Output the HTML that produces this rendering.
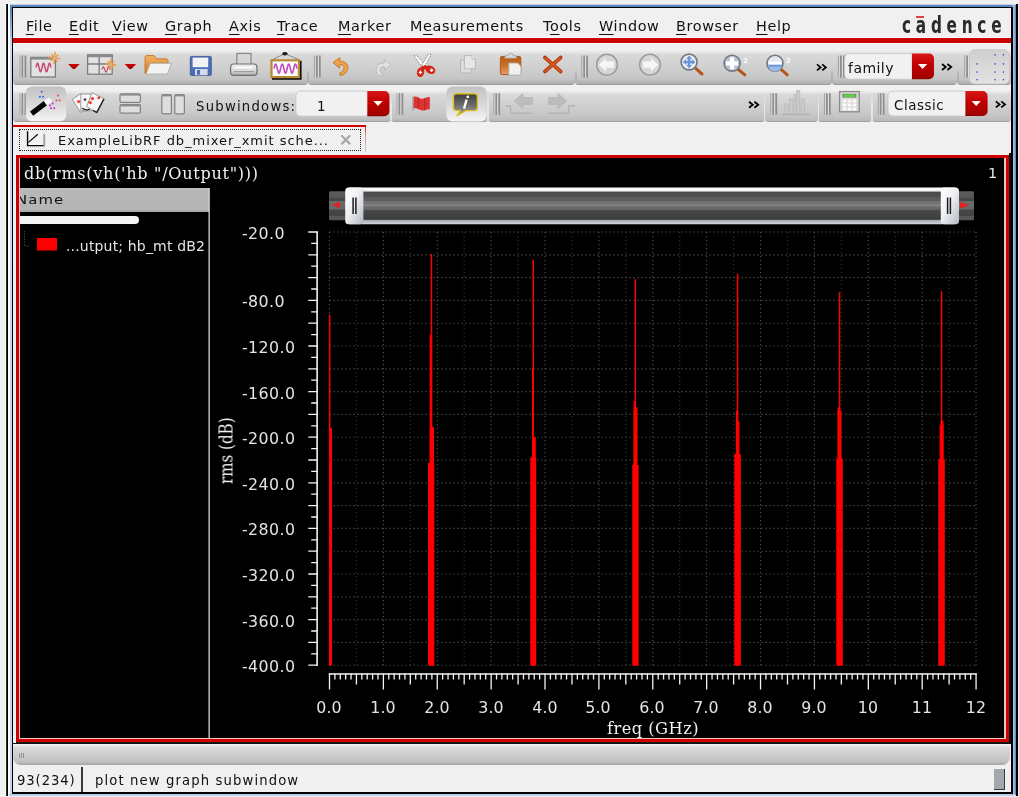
<!DOCTYPE html><html><head><meta charset="utf-8"><title>Cadence waveform viewer</title><style>
html,body{margin:0;padding:0;}
body{width:1019px;height:797px;overflow:hidden;background:#f0f0f0;position:relative;font-family:"DejaVu Sans","Liberation Sans",sans-serif;color:#000;}
.a{position:absolute;}
.t{position:absolute;white-space:pre;line-height:1;will-change:transform;}
.menu{font-size:14.4px;top:18.8px;letter-spacing:0.62px;color:#111;}
.menu u{text-decoration:underline;text-underline-offset:2.5px;text-decoration-thickness:1.2px;}
.tb{position:absolute;background:linear-gradient(#f0f0f0 0%,#f0f0f0 10%,#e6e6e6 16%,#d9d9d9 22%,#d1d1d1 50%,#c9c9c9 75%,#c3c3c3 86%,#bbbbbb 89%,#b3b3b3 96%,#9c9c9c 97.8%,#9c9c9c 100%);border-radius:0 0 3.4px 3.4px;}
.tb2{position:absolute;background:linear-gradient(#f1f1f1 0%,#f1f1f1 14%,#e6e6e6 20%,#d9d9d9 26%,#d1d1d1 50%,#c9c9c9 75%,#c1c1c1 90%,#b8b8b8 96%,#a2a2a2 97.6%,#a2a2a2 100%);border-radius:0 0 3.4px 3.4px;}
.ui{font-size:13px;letter-spacing:0.96px;color:#111;}
.pl{font-size:14px;color:#e4e4e4;}
</style></head><body>
<div class="a" style="left:5px;top:3px;width:5px;height:793px;background:#fafafa"></div>
<div class="a" style="left:6px;top:4px;width:2px;height:792px;background:linear-gradient(90deg,#555 0,#000 50%,#000 100%)"></div>
<div class="a" style="left:10px;top:5px;width:2px;height:790px;background:linear-gradient(#5786bf 0,#5786bf 6px,#c9d9f2 40px,#c3d3f0 100%)"></div>
<div class="a" style="left:10px;top:4px;width:1007px;height:1px;background:#c5cfe3"></div>
<div class="a" style="left:10px;top:5px;width:1007px;height:2px;background:#5786bf"></div>
<div class="a" style="left:1012px;top:5px;width:4px;height:790px;background:linear-gradient(90deg,#86a8d8 0,#a9c2e6 45%,#4f80bb 100%)"></div>
<div class="a" style="left:1016px;top:4px;width:2px;height:792px;background:#000"></div>
<div class="a" style="left:9px;top:794px;width:1006px;height:2px;background:#bccdee"></div>
<div class="a" style="left:12px;top:7px;width:1001px;height:787px;box-sizing:border-box;border:1px solid #000;border-right-width:2px;border-bottom-width:2px;"></div>
<div class="t menu" style="left:26.4px"><u>F</u>ile</div>
<div class="t menu" style="left:68.6px"><u>E</u>dit</div>
<div class="t menu" style="left:112px"><u>V</u>iew</div>
<div class="t menu" style="left:165.2px"><u>G</u>raph</div>
<div class="t menu" style="left:229.4px"><u>A</u>xis</div>
<div class="t menu" style="left:276.8px"><u>T</u>race</div>
<div class="t menu" style="left:338px"><u>M</u>arker</div>
<div class="t menu" style="left:409.6px">M<u>e</u>asurements</div>
<div class="t menu" style="left:542.8px">T<u>o</u>ols</div>
<div class="t menu" style="left:599px"><u>W</u>indow</div>
<div class="t menu" style="left:675.6px"><u>B</u>rowser</div>
<div class="t menu" style="left:755.6px"><u>H</u>elp</div>
<div class="t" style="left:901.6px;top:14.4px;font-family:'DejaVu Sans Condensed','DejaVu Sans',sans-serif;font-weight:bold;font-size:17px;letter-spacing:4.75px;color:#2a2a2a;transform-origin:0 0;transform:scaleY(1.36)">cadence</div>
<div class="a" style="left:916px;top:15.8px;width:7.6px;height:2px;background:#e04040"></div>
<div class="a" style="left:13px;top:38px;width:998px;height:5px;background:#cc0000"></div>
<div class="a" style="left:13px;top:37px;width:998px;height:1px;background:#f6fbfb"></div>
<div class="a" style="left:13px;top:43px;width:998px;height:1px;background:#f6f6f6"></div>
<div class="tb" style="left:13px;top:46px;width:295px;height:38.5px"></div>
<div class="tb" style="left:308px;top:46px;width:267.4px;height:38.5px"></div>
<div class="tb" style="left:575.4px;top:46px;width:256.6px;height:38.5px"></div>
<div class="tb" style="left:832px;top:46px;width:125.39999999999998px;height:38.5px"></div>
<div class="tb" style="left:957.4px;top:46px;width:53.60000000000002px;height:38.5px"></div>
<div class="a" style="left:307.1px;top:70.5px;width:2.2px;height:12px;background:linear-gradient(rgba(184,184,184,0.3),#b2b2b2 30%)"></div>
<div class="a" style="left:574.5px;top:70.5px;width:2.2px;height:12px;background:linear-gradient(rgba(184,184,184,0.3),#b2b2b2 30%)"></div>
<div class="a" style="left:831.1px;top:70.5px;width:2.2px;height:12px;background:linear-gradient(rgba(184,184,184,0.3),#b2b2b2 30%)"></div>
<div class="a" style="left:956.5px;top:70.5px;width:2.2px;height:12px;background:linear-gradient(rgba(184,184,184,0.3),#b2b2b2 30%)"></div>
<div class="tb2" style="left:13px;top:85px;width:378.2px;height:37.400000000000006px"></div>
<div class="tb2" style="left:391.2px;top:85px;width:97.0px;height:37.400000000000006px"></div>
<div class="tb2" style="left:488.2px;top:85px;width:276.40000000000003px;height:37.400000000000006px"></div>
<div class="tb2" style="left:764.6px;top:85px;width:53.799999999999955px;height:37.400000000000006px"></div>
<div class="tb2" style="left:818.4px;top:85px;width:53.80000000000007px;height:37.400000000000006px"></div>
<div class="tb2" style="left:872.2px;top:85px;width:138.79999999999995px;height:37.400000000000006px"></div>
<div class="a" style="left:390.3px;top:94px;width:1.8px;height:26px;background:linear-gradient(rgba(236,236,236,0),rgba(236,236,236,0.85) 45%,rgba(232,232,232,0.9))"></div>
<div class="a" style="left:487.3px;top:94px;width:1.8px;height:26px;background:linear-gradient(rgba(236,236,236,0),rgba(236,236,236,0.85) 45%,rgba(232,232,232,0.9))"></div>
<div class="a" style="left:763.7px;top:94px;width:1.8px;height:26px;background:linear-gradient(rgba(236,236,236,0),rgba(236,236,236,0.85) 45%,rgba(232,232,232,0.9))"></div>
<div class="a" style="left:817.5px;top:94px;width:1.8px;height:26px;background:linear-gradient(rgba(236,236,236,0),rgba(236,236,236,0.85) 45%,rgba(232,232,232,0.9))"></div>
<div class="a" style="left:871.3000000000001px;top:94px;width:1.8px;height:26px;background:linear-gradient(rgba(236,236,236,0),rgba(236,236,236,0.85) 45%,rgba(232,232,232,0.9))"></div>
<svg class="a" style="left:0;top:0" width="1019" height="797" viewBox="0 0 1019 797">
<defs>
<linearGradient id="ra" x1="0" y1="0" x2="0" y2="1"><stop offset="0" stop-color="#d40000"/><stop offset="1" stop-color="#9c0000"/></linearGradient>
<linearGradient id="rb" x1="0" y1="0" x2="0" y2="1"><stop offset="0" stop-color="#d81818"/><stop offset="0.45" stop-color="#c00000"/><stop offset="1" stop-color="#a00000"/></linearGradient>
<linearGradient id="pr" x1="0" y1="0" x2="0" y2="1"><stop offset="0" stop-color="#c2c2c2"/><stop offset="0.5" stop-color="#d8d8d8"/><stop offset="1" stop-color="#f4f4f4"/></linearGradient>
<linearGradient id="bub" x1="0" y1="0" x2="0" y2="1"><stop offset="0" stop-color="#3c3c3c"/><stop offset="0.5" stop-color="#6a6a6a"/><stop offset="1" stop-color="#a0a0a0"/></linearGradient>
<linearGradient id="fold" x1="0" y1="0" x2="0" y2="1"><stop offset="0" stop-color="#f2b264"/><stop offset="1" stop-color="#d87820"/></linearGradient>
<linearGradient id="clip" x1="0" y1="0" x2="0" y2="1"><stop offset="0" stop-color="#b85a10"/><stop offset="0.6" stop-color="#d07830"/><stop offset="1" stop-color="#e8a070"/></linearGradient>
<linearGradient id="prn" x1="0" y1="0" x2="0" y2="1"><stop offset="0" stop-color="#f0f0f0"/><stop offset="0.55" stop-color="#dcdcdc"/><stop offset="1" stop-color="#a8a8a8"/></linearGradient>
<linearGradient id="gb" x1="0" y1="0" x2="0" y2="1"><stop offset="0" stop-color="#cfcfcf"/><stop offset="1" stop-color="#e2e2e2"/></linearGradient>
</defs>
<rect x="19.5" y="55.5" width="1.2" height="22.099999999999994" fill="#a6a6a6"/><rect x="20.7" y="55.5" width="0.9" height="22.099999999999994" fill="#d8d8d8"/><rect x="21.6" y="55.5" width="1.9" height="22.099999999999994" fill="#8e8e8e"/><rect x="23.5" y="55.5" width="1.0" height="22.099999999999994" fill="#e6e6e6"/><rect x="24.5" y="55.5" width="1.8" height="22.099999999999994" fill="#8e8e8e"/>
<rect x="313.9" y="55.5" width="1.2" height="22.099999999999994" fill="#a6a6a6"/><rect x="315.1" y="55.5" width="0.9" height="22.099999999999994" fill="#d8d8d8"/><rect x="316.0" y="55.5" width="1.9" height="22.099999999999994" fill="#8e8e8e"/><rect x="317.9" y="55.5" width="1.0" height="22.099999999999994" fill="#e6e6e6"/><rect x="318.9" y="55.5" width="1.8" height="22.099999999999994" fill="#8e8e8e"/>
<rect x="581.2" y="55.5" width="1.2" height="22.099999999999994" fill="#a6a6a6"/><rect x="582.4" y="55.5" width="0.9" height="22.099999999999994" fill="#d8d8d8"/><rect x="583.3" y="55.5" width="1.9" height="22.099999999999994" fill="#8e8e8e"/><rect x="585.2" y="55.5" width="1.0" height="22.099999999999994" fill="#e6e6e6"/><rect x="586.2" y="55.5" width="1.8" height="22.099999999999994" fill="#8e8e8e"/>
<rect x="837.9" y="55.5" width="1.2" height="22.099999999999994" fill="#a6a6a6"/><rect x="839.1" y="55.5" width="0.9" height="22.099999999999994" fill="#d8d8d8"/><rect x="840.0" y="55.5" width="1.9" height="22.099999999999994" fill="#8e8e8e"/><rect x="841.9" y="55.5" width="1.0" height="22.099999999999994" fill="#e6e6e6"/><rect x="842.9" y="55.5" width="1.8" height="22.099999999999994" fill="#8e8e8e"/>
<rect x="964.1" y="55.5" width="1.2" height="22.099999999999994" fill="#a6a6a6"/><rect x="965.3" y="55.5" width="0.9" height="22.099999999999994" fill="#d8d8d8"/><rect x="966.2" y="55.5" width="1.9" height="22.099999999999994" fill="#8e8e8e"/><rect x="968.1" y="55.5" width="1.0" height="22.099999999999994" fill="#e6e6e6"/><rect x="969.1" y="55.5" width="1.8" height="22.099999999999994" fill="#8e8e8e"/>
<rect x="30.8" y="57.4" width="24.6" height="19.6" fill="#e2e2e2" stroke="#7c7c7c" stroke-width="1.3"/>
<rect x="30.8" y="57.4" width="24.6" height="2.2" fill="#8a8a8a"/>
<path d="M36.0 67.5 L36.4 65.9 L36.8 64.5 L37.1 63.5 L37.5 63.2 L37.9 63.5 L38.2 64.5 L38.6 65.9 L39.0 67.5 L39.4 69.1 L39.8 70.5 L40.1 71.5 L40.5 71.8 L40.9 71.5 L41.2 70.5 L41.6 69.1 L42.0 67.5 L42.4 65.9 L42.8 64.5 L43.1 63.5 L43.5 63.2 L43.9 63.5 L44.2 64.5 L44.6 65.9 L45.0 67.5 L45.4 69.1 L45.8 70.5 L46.1 71.5 L46.5 71.8 L46.9 71.5 L47.2 70.5 L47.6 69.1 L48.0 67.5 L48.4 65.9 L48.8 64.5 L49.1 63.5 L49.5 63.2 L49.9 63.5 L50.2 64.5 L50.6 65.9 L51.0 67.5" fill="none" stroke="#c84878" stroke-width="1.5" stroke-linejoin="round"/>
<path d="M48.2 57.4 L60.8 58.6 M51.3 54.1 L57.7 61.9 M55.1 51.7 L53.9 64.3 M58.4 54.8 L50.6 61.2 " stroke="#f0983a" stroke-width="1.4" fill="none"/><circle cx="54.5" cy="58" r="1.3" fill="#c8c0b8"/>
<path d="M68.2 63.9 H79.7 L74.9 69.1 H72.9 Z" fill="url(#ra)"/>
<rect x="87.6" y="54.8" width="24.6" height="19.4" fill="#e2e2e2" stroke="#7c7c7c" stroke-width="1.3"/>
<rect x="87.6" y="54.8" width="24.6" height="2.4" fill="#8a8a8a"/>
<path d="M99.2 57 V74 M88 64 H112" stroke="#7c7c7c" stroke-width="1.3"/>
<path d="M102.0 69.5 L102.2 68.9 L102.4 68.3 L102.6 67.8 L102.8 67.4 L103.0 67.1 L103.2 66.9 L103.4 66.9 L103.6 67.0 L103.8 67.3 L104.0 67.7 L104.2 68.1 L104.4 68.7 L104.6 69.3 L104.8 69.9 L105.0 70.5 L105.2 71.0 L105.4 71.5 L105.6 71.8 L105.8 72.0 L106.0 72.1 L106.2 72.0 L106.4 71.8 L106.6 71.5 L106.8 71.0 L107.0 70.5 L107.2 69.9 L107.4 69.3 L107.6 68.7 L107.8 68.1 L108.0 67.7 L108.2 67.3 L108.4 67.0 L108.6 66.9 L108.8 66.9 L109.0 67.1 L109.2 67.4 L109.4 67.8 L109.6 68.3 L109.8 68.9 L110.0 69.5" fill="none" stroke="#c84878" stroke-width="1.2" stroke-linejoin="round"/>
<path d="M104.9 63.8 L116.1 65.0 M107.7 60.9 L113.3 67.9 M111.1 58.8 L109.9 70.0 M114.0 61.6 L107.0 67.2 " stroke="#f0983a" stroke-width="1.4" fill="none"/><circle cx="110.5" cy="64.4" r="1.3" fill="#c8c0b8"/>
<path d="M124.7 63.9 H136.2 L131.4 69.1 H129.4 Z" fill="url(#ra)"/>
<path d="M145 73.5 V57.5 q0 -2 2 -2 h6 q1.5 0 2.5 2 l1 1.3 h9.5 q2 0 2 2 v2.5 h-17.5 l-4.3 10.2 Z" fill="url(#fold)" stroke="#c07020" stroke-width="0.8"/>
<path d="M150.2 63.3 H171.4 L167.4 74 H146 Z" fill="#f2f2f2" stroke="#a8a8a8" stroke-width="0.8"/>
<rect x="190.3" y="56.4" width="21" height="19" rx="1.2" fill="#4c6eb4" stroke="#3c5898" stroke-width="0.9"/>
<rect x="192.6" y="57.6" width="15.6" height="9.6" fill="#f2f2f4"/>
<rect x="195" y="69" width="12.6" height="6.2" fill="#d4dae8"/>
<rect x="197" y="70" width="3" height="4.6" fill="#4c6eb4"/>
<rect x="236.8" y="53.4" width="14.2" height="11.6" fill="#d6d6d6" stroke="#808080" stroke-width="1.1"/>
<rect x="230.6" y="64" width="26.4" height="11.4" rx="3.2" fill="url(#prn)" stroke="#6e6e6e" stroke-width="1.2"/>
<path d="M235 67.6 H252.6" stroke="#fff" stroke-width="1.6"/><path d="M234 71.6 H254" stroke="#9a9a9a" stroke-width="1"/>
<path d="M271.5 60 L284.9 53.6 L299.5 60" fill="none" stroke="#8a8a8a" stroke-width="1"/>
<ellipse cx="284.9" cy="53.8" rx="2.8" ry="1.8" fill="#1a1a1a"/>
<rect x="272" y="60.8" width="29.6" height="19" fill="#111"/>
<rect x="270.4" y="59.2" width="29.6" height="19" fill="#b88a32"/>
<rect x="272.6" y="61.4" width="25.2" height="14.6" fill="#fbfbfb"/>
<path d="M274.0 68.6 L274.6 66.2 L275.1 64.5 L275.7 64.0 L276.3 64.9 L276.9 66.8 L277.4 69.3 L278.0 71.6 L278.6 73.0 L279.2 73.1 L279.8 71.9 L280.3 69.7 L280.9 67.2 L281.5 65.1 L282.1 64.1 L282.6 64.4 L283.2 65.9 L283.8 68.2 L284.4 70.7 L284.9 72.5 L285.5 73.2 L286.1 72.5 L286.6 70.7 L287.2 68.2 L287.8 65.9 L288.4 64.4 L288.9 64.1 L289.5 65.1 L290.1 67.2 L290.7 69.7 L291.2 71.9 L291.8 73.1 L292.4 73.0 L293.0 71.6 L293.6 69.3 L294.1 66.8 L294.7 64.9 L295.3 64.0 L295.9 64.5 L296.4 66.2 L297.0 68.6" fill="none" stroke="#c050c0" stroke-width="1.6" stroke-linejoin="round"/>
<path d="M333 62.5 L340 57.5 L339.6 61 C346 61 348.8 65 347.6 69.5 C346.8 72.8 344 75 340.4 75.6 L339.6 73.2 C342.6 72 344 70.2 344 67.6 C344 65.4 342.6 64.6 339.2 64.8 L339.4 68 Z" fill="#eea24e" stroke="#c6781e" stroke-width="1" stroke-linejoin="round"/>
<path d="M391 64.5 L384 59.5 L384.4 63 C378 63 375.2 67 376.4 71.5 C377.2 74.8 380 76 382.6 76.2 L383 74.2 C381 73.4 380 72.2 380 69.8 C380 67.4 381.4 66.6 384.8 66.8 L384.6 70 Z" fill="#e2e2e2" stroke="#b6b6b6" stroke-width="0.9" stroke-linejoin="round"/>
<path d="M414 55.8 L416.4 55 L425.6 65.6 L422.4 67.8 Z" fill="#f8f8f8" stroke="#7c7c7c" stroke-width="0.9" stroke-dasharray="1.2 0.8"/>
<path d="M431 54.6 L428.6 54 L421.2 65.6 L424.6 67.6 Z" fill="#f8f8f8" stroke="#7c7c7c" stroke-width="0.9" stroke-dasharray="1.2 0.8"/>
<path d="M422.6 65.4 L425.4 67.6 L423.6 71 L420 69 Z" fill="#d02412"/>
<path d="M424.6 65 L422.4 67.6 L428 71 L429.6 67.4 Z" fill="#d02412"/>
<ellipse cx="420.6" cy="72.2" rx="3.7" ry="4.9" fill="#d42614" transform="rotate(14 420.6 72.2)"/>
<ellipse cx="430.4" cy="69.8" rx="5.2" ry="4" fill="#d42614" transform="rotate(28 430.4 69.8)"/>
<path d="M420.4 70.6 v3.6 M418.6 72.4 h3.6" stroke="#fbeaea" stroke-width="1.3"/><path d="M431.6 68.6 v3.4 M429.9 70.3 h3.4" stroke="#fbeaea" stroke-width="1.5"/>
<path d="M460.6 59.8 H471.2 V73 H460.6 Z" fill="#dedede" stroke="#b4b4b4" stroke-width="0.9"/>
<path d="M464.4 55.6 H472 L475.4 59 V68.8 H464.4 Z" fill="#e6e6e6" stroke="#b4b4b4" stroke-width="0.9"/>
<path d="M472 55.6 V59 H475.4" fill="#f6f6f6" stroke="#b4b4b4" stroke-width="0.8"/>
<rect x="500.4" y="56.4" width="20.4" height="18.2" rx="1.6" fill="url(#clip)" stroke="#a85010" stroke-width="0.9"/>
<path d="M504.6 58.2 q0 -3 3 -3 h0.8 q0 -2 2.2 -2 q2.2 0 2.2 2 h0.8 q3 0 3 3 Z" fill="#d8d8d8" stroke="#9c9c9c" stroke-width="0.8"/>
<path d="M508.8 63 H517.6 L521 66.4 V75.2 H508.8 Z" fill="#f0f0f0" stroke="#a4a4a4" stroke-width="0.8"/>
<path d="M545 57.6 L560.6 71.4 M560.6 57.6 L545 71.4" stroke="#a83810" stroke-width="3.8" stroke-linecap="round"/><path d="M545.4 58 L560.2 71 M560.2 58 L545.4 71" stroke="#d8581c" stroke-width="2.1" stroke-linecap="round"/>
<circle cx="607" cy="64.7" r="10.4" fill="#d6d6d6" stroke="#9c9c9c" stroke-width="1.5"/>
<path d="M599 64.7 L606 58 V61.6 H614 V67.8 H606 V71.4 Z" fill="#f6f6f6"/>
<circle cx="650" cy="64.7" r="10.4" fill="#d6d6d6" stroke="#9c9c9c" stroke-width="1.5"/>
<path d="M658 64.7 L651 58 V61.6 H643 V67.8 H651 V71.4 Z" fill="#f6f6f6"/>
<path d="M694.8 67.7 L702 74" stroke="#b4561a" stroke-width="3" stroke-linecap="round"/><circle cx="689.1" cy="62" r="7.9" fill="#f2f5f9" stroke="#737a84" stroke-width="1.8"/><circle cx="689.1" cy="62" r="6.5" fill="#eef2f8"/><path d="M689.1 55.6 l3 3.4 h-1.7 v1.7 h1.7 v-1.7 l3.4 3 l-3.4 3 v-1.7 h-1.7 v1.7 h1.7 l-3 3.4 l-3 -3.4 h1.7 v-1.7 h-1.7 v1.7 l-3.4 -3 l3.4 -3 v1.7 h1.7 v-1.7 h-1.7 Z" fill="#6b96d8"/>
<path d="M737.8 69.0 L744.8 74.8" stroke="#b4561a" stroke-width="3" stroke-linecap="round"/><circle cx="732.1" cy="63.3" r="7.9" fill="#f2f5f9" stroke="#737a84" stroke-width="1.8"/><circle cx="732.1" cy="63.3" r="7.0" fill="#b4c0d2"/><path d="M726.1 63.3 H738.1 M732.1 57.3 V69.3" stroke="#ffffff" stroke-width="4.2"/>
<path d="M780.7 69.0 L787.2 74.8" stroke="#b4561a" stroke-width="3" stroke-linecap="round"/><circle cx="775" cy="63.3" r="7.9" fill="#f2f5f9" stroke="#737a84" stroke-width="1.8"/><circle cx="775" cy="63.3" r="7.0" fill="#e4e9f0"/><path d="M768.1 64.5 A6.9 6.9 0 0 0 781.9 64.5 Z" fill="#9dbbe8"/><path d="M768.5 65.7 H781.5" stroke="#6b96d8" stroke-width="2"/><path d="M768.6 63.099999999999994 H781.4" stroke="#ffffff" stroke-width="2.6"/>
<text x="743.2" y="62.6" font-family="DejaVu Sans, Liberation Sans, sans-serif" font-size="6.6" font-weight="bold" fill="#fbfbfb">2</text>
<text x="786" y="62.6" font-family="DejaVu Sans, Liberation Sans, sans-serif" font-size="6.6" font-weight="bold" fill="#fbfbfb">2</text>
<path d="M817.0 64.4 L820.6 67.4 L817.0 70.4" fill="none" stroke="#000" stroke-width="1.8"/><path d="M822.2 64.4 L825.8 67.4 L822.2 70.4" fill="none" stroke="#000" stroke-width="1.8"/>
<path d="M942.0 64.0 L945.8 67.0 L942.0 70.0" fill="none" stroke="#000" stroke-width="1.8"/><path d="M947.4 64.0 L951.2 67.0 L947.4 70.0" fill="none" stroke="#000" stroke-width="1.8"/>
<path d="M849.5 53.6 H912 V79.2 H849.5 a5 5 0 0 1 -5 -5 V58.6 a5 5 0 0 1 5 -5 Z" fill="#f1f1f1" stroke="#c4c4c4" stroke-width="0.8"/><path d="M912 53.6 H929 a5 5 0 0 1 5 5 V74.2 a5 5 0 0 1 -5 5 H912 Z" fill="url(#rb)"/><path d="M912 78.2 H930" stroke="#7a0000" stroke-width="1" opacity="0.6"/><path d="M918.0 64.1 H927.2 L922.6 69.1 Z" fill="#fff"/>
<rect x="969.4" y="49.6" width="40" height="34.4" rx="5.5" fill="url(#gb)" stroke="#c6c6c6" stroke-width="0.8"/>
<rect x="994.4" y="54.199999999999996" width="1.3" height="1.3" fill="#3038c8"/><rect x="1002.8" y="54.199999999999996" width="1.3" height="1.3" fill="#3038c8"/><rect x="976.4" y="63.199999999999996" width="1.3" height="1.3" fill="#3038c8"/><rect x="994.4" y="63.199999999999996" width="1.3" height="1.3" fill="#3038c8"/><rect x="1002.8" y="63.199999999999996" width="1.3" height="1.3" fill="#3038c8"/><rect x="976.4" y="71.4" width="1.3" height="1.3" fill="#3038c8"/><rect x="994.4" y="71.4" width="1.3" height="1.3" fill="#3038c8"/><rect x="1002.8" y="71.4" width="1.3" height="1.3" fill="#3038c8"/><rect x="976.4" y="79.0" width="1.3" height="1.3" fill="#3038c8"/><rect x="994.4" y="79.0" width="1.3" height="1.3" fill="#3038c8"/><rect x="1002.8" y="79.0" width="1.3" height="1.3" fill="#3038c8"/>
<rect x="19.5" y="93.2" width="1.2" height="21.599999999999994" fill="#a6a6a6"/><rect x="20.7" y="93.2" width="0.9" height="21.599999999999994" fill="#d8d8d8"/><rect x="21.6" y="93.2" width="1.9" height="21.599999999999994" fill="#8e8e8e"/><rect x="23.5" y="93.2" width="1.0" height="21.599999999999994" fill="#e6e6e6"/><rect x="24.5" y="93.2" width="1.8" height="21.599999999999994" fill="#8e8e8e"/>
<rect x="396.5" y="93.2" width="1.2" height="21.599999999999994" fill="#a6a6a6"/><rect x="397.7" y="93.2" width="0.9" height="21.599999999999994" fill="#d8d8d8"/><rect x="398.6" y="93.2" width="1.9" height="21.599999999999994" fill="#8e8e8e"/><rect x="400.5" y="93.2" width="1.0" height="21.599999999999994" fill="#e6e6e6"/><rect x="401.5" y="93.2" width="1.8" height="21.599999999999994" fill="#8e8e8e"/>
<rect x="493.3" y="93.2" width="1.2" height="21.599999999999994" fill="#a6a6a6"/><rect x="494.5" y="93.2" width="0.9" height="21.599999999999994" fill="#d8d8d8"/><rect x="495.4" y="93.2" width="1.9" height="21.599999999999994" fill="#8e8e8e"/><rect x="497.3" y="93.2" width="1.0" height="21.599999999999994" fill="#e6e6e6"/><rect x="498.3" y="93.2" width="1.8" height="21.599999999999994" fill="#8e8e8e"/>
<rect x="770.3" y="93.2" width="1.2" height="21.599999999999994" fill="#a6a6a6"/><rect x="771.5" y="93.2" width="0.9" height="21.599999999999994" fill="#d8d8d8"/><rect x="772.4" y="93.2" width="1.9" height="21.599999999999994" fill="#8e8e8e"/><rect x="774.3" y="93.2" width="1.0" height="21.599999999999994" fill="#e6e6e6"/><rect x="775.3" y="93.2" width="1.8" height="21.599999999999994" fill="#8e8e8e"/>
<rect x="823.9" y="93.2" width="1.2" height="21.599999999999994" fill="#a6a6a6"/><rect x="825.1" y="93.2" width="0.9" height="21.599999999999994" fill="#d8d8d8"/><rect x="826.0" y="93.2" width="1.9" height="21.599999999999994" fill="#8e8e8e"/><rect x="827.9" y="93.2" width="1.0" height="21.599999999999994" fill="#e6e6e6"/><rect x="828.9" y="93.2" width="1.8" height="21.599999999999994" fill="#8e8e8e"/>
<rect x="877.7" y="93.2" width="1.2" height="21.599999999999994" fill="#a6a6a6"/><rect x="878.9" y="93.2" width="0.9" height="21.599999999999994" fill="#d8d8d8"/><rect x="879.8" y="93.2" width="1.9" height="21.599999999999994" fill="#8e8e8e"/><rect x="881.7" y="93.2" width="1.0" height="21.599999999999994" fill="#e6e6e6"/><rect x="882.7" y="93.2" width="1.8" height="21.599999999999994" fill="#8e8e8e"/>
<rect x="25.8" y="86.6" width="40.4" height="34.6" rx="6" fill="url(#pr)"/>
<path d="M31.6 113.6 L45.4 103.2" stroke="#050505" stroke-width="5.2" stroke-linecap="butt"/>
<path d="M45.4 103.2 L50.6 99.3" stroke="#f8f8f8" stroke-width="4.6"/>
<rect x="40.800000000000004" y="90.9" width="1.7" height="1.7" fill="#2860f0"/><rect x="39.0" y="96.0" width="1.7" height="1.7" fill="#2860f0"/><rect x="42.2" y="96.0" width="1.7" height="1.7" fill="#2860f0"/><rect x="57.2" y="94.60000000000001" width="1.7" height="1.7" fill="#f04040"/><rect x="55.6" y="99.60000000000001" width="1.7" height="1.7" fill="#f04040"/><rect x="58.800000000000004" y="99.60000000000001" width="1.7" height="1.7" fill="#f04040"/><rect x="49.2" y="104.60000000000001" width="1.7" height="1.7" fill="#d020d0"/><rect x="51.800000000000004" y="102.60000000000001" width="1.7" height="1.7" fill="#d020d0"/><rect x="50.2" y="107.4" width="1.7" height="1.7" fill="#d020d0"/><rect x="53.400000000000006" y="107.4" width="1.7" height="1.7" fill="#d020d0"/>
<g stroke="#909090" stroke-width="0.9" fill="#f8f8f8">
<path d="M72.4 99.4 L80.6 93.6 L89 109 L80.6 112.4 Z"/>
<path d="M80.8 94 L91.6 94 L91.6 110.8 L80.8 110.8 Z"/>
<path d="M92 92.6 L104 98.6 L96.6 112.6 L86.6 106.6 Z"/>
</g>
<path d="M104 98.8 L96.8 112.4 L93 110.4" fill="none" stroke="#2a2a2a" stroke-width="1.5"/>
<g fill="#f04030"><circle cx="78.6" cy="101.6" r="1.6"/><circle cx="92.4" cy="98.6" r="1.7"/><circle cx="98.8" cy="97.8" r="1.5"/><circle cx="90.2" cy="102.6" r="1.7"/></g>
<path d="M83.4 99.6 l1.6 -1.6 l1.6 1.6 l-1.6 1.6 Z" fill="#333"/><path d="M82 108.4 l5 1.6 l3 -1" stroke="#222" stroke-width="1.2" fill="none"/>
<rect x="120" y="93.8" width="20.4" height="8.6" rx="1.4" fill="#dedede" stroke="#828282" stroke-width="1.2"/><rect x="120" y="93.8" width="20.4" height="1.8" fill="#8c8c8c"/>
<rect x="120" y="104.6" width="20.4" height="8.6" rx="1.4" fill="#dedede" stroke="#828282" stroke-width="1.2"/><rect x="120" y="104.6" width="20.4" height="1.8" fill="#8c8c8c"/>
<rect x="161.8" y="94.6" width="9.6" height="19.2" rx="1.4" fill="#dedede" stroke="#828282" stroke-width="1.2"/><rect x="161.8" y="94.6" width="9.6" height="1.8" fill="#8c8c8c"/>
<rect x="174.8" y="94.6" width="9.6" height="19.2" rx="1.4" fill="#dedede" stroke="#828282" stroke-width="1.2"/><rect x="174.8" y="94.6" width="9.6" height="1.8" fill="#8c8c8c"/>
<path d="M300.8 91 H367.4 V116.2 H300.8 a5 5 0 0 1 -5 -5 V96 a5 5 0 0 1 5 -5 Z" fill="#f1f1f1" stroke="#c4c4c4" stroke-width="0.8"/><path d="M367.4 91 H384.4 a5 5 0 0 1 5 5 V111.2 a5 5 0 0 1 -5 5 H367.4 Z" fill="url(#rb)"/><path d="M367.4 115.2 H385.4" stroke="#7a0000" stroke-width="1" opacity="0.6"/><path d="M373.4 101.1 H382.6 L378 106.1 Z" fill="#fff"/>
<path d="M413 96.6 V110.8" stroke="#9a9a9a" stroke-width="1.2"/>
<path d="M413.6 97 C417 95.4 419 99.4 422.4 98.8 C425.6 98.2 427 96.4 429.8 97 V109.4 C427 108.6 425.4 110.8 422.4 110.6 C419 110.4 417 107.4 413.6 108.6 Z" fill="#dc3434"/>
<path d="M418.4 97.8 V108.6 M424.8 98.2 V110" stroke="#b81c1c" stroke-width="1.4" opacity="0.7"/>
<rect x="446.4" y="86.6" width="40.2" height="34.8" rx="6" fill="url(#pr)"/>
<path d="M456.4 93.8 H474.4 q3 0 3 3 V107.6 q0 3 -3 3 H466 L457 115.6 L460.4 110.6 H456.4 q-3 0 -3 -3 V96.8 q0 -3 3 -3 Z" fill="url(#bub)" stroke="#dcc020" stroke-width="1.4" stroke-linejoin="round"/>
<path d="M466.6 99.6 L464 108.6" stroke="#fafafa" stroke-width="2.4"/><circle cx="467.8" cy="96.8" r="1.4" fill="#fafafa"/>
<g fill="#bcbcbc" stroke="#b0b0b0" stroke-width="0.6">
<path d="M514.2 101 L523 93.4 V97.6 H532.6 V104.4 H523 V108.6 Z"/>
<path d="M566.8 101 L558 93.4 V97.6 H548.4 V104.4 H558 V108.6 Z"/>
</g>
<path d="M505.4 106 H510.6 V113.3 H532.8 M548.2 113.3 H568.6 V106 H575" fill="none" stroke="#b4b4b4" stroke-width="1.4"/>
<path d="M749.0 101.8 L752.8 104.8 L749.0 107.8" fill="none" stroke="#000" stroke-width="1.8"/><path d="M754.4 101.8 L758.2 104.8 L754.4 107.8" fill="none" stroke="#000" stroke-width="1.8"/>
<g fill="#cacaca" stroke="#b8b8b8" stroke-width="0.7"><rect x="784.6" y="104" width="3.6" height="10"/><rect x="789.4" y="99" width="3.6" height="15"/><rect x="794.2" y="94.6" width="3.4" height="19.4"/><rect x="796.6" y="90.6" width="3.2" height="23.4"/><rect x="801" y="99" width="3.6" height="15"/></g>
<path d="M782 114.4 H810.4" stroke="#b0b0b0" stroke-width="1.2"/>
<rect x="839.6" y="91.6" width="19.6" height="20.2" fill="#dcdcdc" stroke="#8a8a8a" stroke-width="1.3"/>
<rect x="842.4" y="93.8" width="14" height="3.8" fill="#7a7a7a"/><rect x="843.6" y="94.4" width="11.6" height="2.6" fill="#58d838"/>
<rect x="842.8" y="99.6" width="3.4" height="2.8" fill="#fbfbfb"/><rect x="847.7" y="99.6" width="3.4" height="2.8" fill="#fbfbfb"/><rect x="852.6" y="99.6" width="3.4" height="2.8" fill="#fbfbfb"/><rect x="842.8" y="103.6" width="3.4" height="2.8" fill="#fbfbfb"/><rect x="847.7" y="103.6" width="3.4" height="2.8" fill="#fbfbfb"/><rect x="852.6" y="103.6" width="3.4" height="2.8" fill="#fbfbfb"/><rect x="842.8" y="107.6" width="3.4" height="2.8" fill="#fbfbfb"/><rect x="847.7" y="107.6" width="3.4" height="2.8" fill="#fbfbfb"/><rect x="852.6" y="107.6" width="3.4" height="2.8" fill="#fbfbfb"/>
<path d="M893 91.1 H965.5 V116 H893 a5 5 0 0 1 -5 -5 V96.1 a5 5 0 0 1 5 -5 Z" fill="#f1f1f1" stroke="#c4c4c4" stroke-width="0.8"/><path d="M965.5 91.1 H982.6 a5 5 0 0 1 5 5 V111 a5 5 0 0 1 -5 5 H965.5 Z" fill="url(#rb)"/><path d="M965.5 115 H983.6" stroke="#7a0000" stroke-width="1" opacity="0.6"/><path d="M971.6 101.1 H980.8000000000001 L976.2 106.1 Z" fill="#fff"/>
<path d="M995.8 101.4 L999.6 104.4 L995.8 107.4" fill="none" stroke="#000" stroke-width="1.8"/><path d="M1001.2 101.4 L1005.0 104.4 L1001.2 107.4" fill="none" stroke="#000" stroke-width="1.8"/>
<rect x="25.6" y="130.6" width="20.2" height="17" fill="#e6e6e6" opacity="0.7"/>
<rect x="43.1" y="134" width="2" height="12.6" fill="#a0a0a0"/>
<rect x="28" y="131.4" width="15.2" height="13.6" fill="#f1f1f1"/>
<path d="M28.9 131.6 V144.2 H43" fill="none" stroke="#fff" stroke-width="1"/>
<path d="M27.6 131.3 V145.6 H43.4" fill="none" stroke="#050505" stroke-width="1.4"/>
<path d="M28.4 142.4 L37.8 134.3" stroke="#111" stroke-width="1.25"/>
</svg>
<div class="t ui" style="left:196.4px;top:99.5px;font-size:13.2px;letter-spacing:1.26px">Subwindows:</div>
<div class="t ui" style="left:316.6px;top:99.6px;font-size:13.4px">1</div>
<div class="t ui" style="left:848.4px;top:61.4px;font-size:14px;letter-spacing:0.45px">family</div>
<div class="t ui" style="left:893.6px;top:99.4px;font-size:13.4px;letter-spacing:0.55px">Classic</div>
<div class="a" style="left:13px;top:125px;width:353px;height:2.4px;background:#d80000"></div>
<div class="a" style="left:364.6px;top:125px;width:1.4px;height:27px;background:linear-gradient(#d80000,#d0a0a0 40%,#c8c8c8)"></div>
<div class="a" style="left:19px;top:129px;width:341.8px;height:22px;box-sizing:border-box;border:1.3px dotted #222"></div>
<div class="t ui" style="left:58.4px;top:134.4px;">ExampleLibRF db_mixer_xmit sche...</div>
<svg class="a" style="left:338.8px;top:133.2px" width="14" height="14" viewBox="0 0 14 14"><path d="M3 3 L10.6 10.6 M10.6 3 L3 10.6" stroke="#a8a8a8" stroke-width="2.2" stroke-linecap="round"/></svg>
<div class="a" style="left:16px;top:155px;width:995px;height:589px;background:#1a1a1a"></div>
<div class="a" style="left:16px;top:155px;width:993px;height:587px;background:#cc0000"></div>
<div class="a" style="left:19px;top:157.6px;width:986.6px;height:581.4px;background:#f0c4c4"></div>
<div class="a" style="left:20px;top:158px;width:984px;height:579.8px;background:#000"></div>
<div class="a" style="left:13px;top:743px;width:998px;height:1px;background:#111"></div>
<div class="a" style="left:1009px;top:153px;width:2px;height:591px;background:#111"></div>
<svg class="a" style="left:0;top:0" width="1019" height="797" viewBox="0 0 1019 797">
<defs><linearGradient id="nm" x1="0" y1="0" x2="0" y2="1"><stop offset="0" stop-color="#c0c0c0"/><stop offset="0.08" stop-color="#b8b8b8"/><stop offset="0.9" stop-color="#b4b4b4"/><stop offset="1" stop-color="#a4a4a4"/></linearGradient>
<linearGradient id="bar" x1="0" y1="0" x2="0" y2="1"><stop offset="0" stop-color="#ffffff"/><stop offset="0.105" stop-color="#eceef0"/><stop offset="0.12" stop-color="#4a4a4a"/><stop offset="0.26" stop-color="#505050"/><stop offset="0.27" stop-color="#5a5a5a"/><stop offset="0.365" stop-color="#5e5e5e"/><stop offset="0.375" stop-color="#707070"/><stop offset="0.465" stop-color="#767676"/><stop offset="0.475" stop-color="#8a8a8a"/><stop offset="0.50" stop-color="#8a8a8a"/><stop offset="0.51" stop-color="#6e6e6e"/><stop offset="0.60" stop-color="#666666"/><stop offset="0.61" stop-color="#4a4a4a"/><stop offset="0.87" stop-color="#3c3c3c"/><stop offset="0.885" stop-color="#a4a8b0"/><stop offset="1" stop-color="#d4d8dc"/></linearGradient>
<linearGradient id="hnd" x1="0" y1="0" x2="1" y2="1"><stop offset="0" stop-color="#ffffff"/><stop offset="0.45" stop-color="#eef0f2"/><stop offset="1" stop-color="#b4b8c2"/></linearGradient>
<linearGradient id="cap" x1="0" y1="0" x2="0" y2="1"><stop offset="0" stop-color="#5c5c5c"/><stop offset="0.22" stop-color="#565656"/><stop offset="0.24" stop-color="#484848"/><stop offset="0.33" stop-color="#484848"/><stop offset="0.35" stop-color="#6a6a6a"/><stop offset="0.62" stop-color="#666"/><stop offset="0.64" stop-color="#454545"/><stop offset="0.85" stop-color="#444"/><stop offset="0.87" stop-color="#585858"/><stop offset="1" stop-color="#545454"/></linearGradient>
</defs>
<rect x="20" y="188" width="189" height="24" fill="url(#nm)"/>
<rect x="208.5" y="188" width="1.3" height="550" fill="#d8d8d8"/>
<path d="M20 216 H135 a4 4 0 0 1 0 8 H20 Z" fill="#f4f4f4"/>
<rect x="37" y="238" width="20" height="12.5" fill="#ff0000"/>
<path d="M24.5 231 V246 H30" fill="none" stroke="#444" stroke-width="1" stroke-dasharray="1.3 1.3"/>
<rect x="329" y="191.3" width="17" height="29" rx="1.5" fill="url(#cap)"/>
<rect x="957" y="191.3" width="17" height="29" rx="1.5" fill="url(#cap)"/>
<rect x="346" y="187.4" width="612" height="36.8" rx="4" fill="url(#bar)"/>
<rect x="345.2" y="187.4" width="18.2" height="36.8" rx="3.5" fill="url(#hnd)"/>
<rect x="940.8" y="187.4" width="18.2" height="36.8" rx="3.5" fill="url(#hnd)"/>
<path d="M353.1 197.5 V214 M355.9 197.5 V214" stroke="#1c1c1c" stroke-width="1.5"/>
<path d="M947.6 197.5 V214 M950.4 197.5 V214" stroke="#1c1c1c" stroke-width="1.5"/>
<path d="M332 205 L339.8 202 V208 Z" fill="#f01818"/>
<path d="M968.6 205.2 L960.2 202 V208.4 Z" fill="#f01818"/>
<g fill="none" stroke-width="1.15" stroke-dasharray="1.25 2.75"><path d="M329.5 232 V665.2" stroke="#4c4c4c"/><path d="M356.44 232 V665.2" stroke="#2e2e2e"/><path d="M383.38 232 V665.2" stroke="#4c4c4c"/><path d="M410.32 232 V665.2" stroke="#2e2e2e"/><path d="M437.26 232 V665.2" stroke="#4c4c4c"/><path d="M464.2 232 V665.2" stroke="#2e2e2e"/><path d="M491.14 232 V665.2" stroke="#4c4c4c"/><path d="M518.08 232 V665.2" stroke="#2e2e2e"/><path d="M545.02 232 V665.2" stroke="#4c4c4c"/><path d="M571.96 232 V665.2" stroke="#2e2e2e"/><path d="M598.9 232 V665.2" stroke="#4c4c4c"/><path d="M625.84 232 V665.2" stroke="#2e2e2e"/><path d="M652.78 232 V665.2" stroke="#4c4c4c"/><path d="M679.72 232 V665.2" stroke="#2e2e2e"/><path d="M706.66 232 V665.2" stroke="#4c4c4c"/><path d="M733.6 232 V665.2" stroke="#2e2e2e"/><path d="M760.54 232 V665.2" stroke="#4c4c4c"/><path d="M787.48 232 V665.2" stroke="#2e2e2e"/><path d="M814.42 232 V665.2" stroke="#4c4c4c"/><path d="M841.36 232 V665.2" stroke="#2e2e2e"/><path d="M868.3 232 V665.2" stroke="#4c4c4c"/><path d="M895.24 232 V665.2" stroke="#2e2e2e"/><path d="M922.18 232 V665.2" stroke="#4c4c4c"/><path d="M949.12 232 V665.2" stroke="#2e2e2e"/><path d="M976.06 232 V665.2" stroke="#4c4c4c"/><path d="M329.5 232 H976.06" stroke="#505050"/><path d="M329.5 254.8 H976.06" stroke="#505050"/><path d="M329.5 277.6 H976.06" stroke="#505050"/><path d="M329.5 300.4 H976.06" stroke="#505050"/><path d="M329.5 323.2 H976.06" stroke="#505050"/><path d="M329.5 346 H976.06" stroke="#505050"/><path d="M329.5 368.8 H976.06" stroke="#505050"/><path d="M329.5 391.6 H976.06" stroke="#505050"/><path d="M329.5 414.4 H976.06" stroke="#505050"/><path d="M329.5 437.2 H976.06" stroke="#505050"/><path d="M329.5 460 H976.06" stroke="#505050"/><path d="M329.5 482.8 H976.06" stroke="#505050"/><path d="M329.5 505.6 H976.06" stroke="#505050"/><path d="M329.5 528.4 H976.06" stroke="#505050"/><path d="M329.5 551.2 H976.06" stroke="#505050"/><path d="M329.5 574 H976.06" stroke="#505050"/><path d="M329.5 596.8 H976.06" stroke="#505050"/><path d="M329.5 619.6 H976.06" stroke="#505050"/><path d="M329.5 642.4 H976.06" stroke="#505050"/><path d="M329.5 665.2 H976.06" stroke="#505050"/></g>
<g fill="#ff0000"><rect x="328.9" y="314.4" width="1.5" height="351.1"/><rect x="329" y="427.7" width="3" height="237.8"/><rect x="430.7" y="254" width="1.5" height="411.5"/><rect x="429.7" y="334.8" width="2.5" height="330.7"/><rect x="429.7" y="427" width="4.3" height="238.5"/><rect x="428" y="463" width="6.3" height="202.5"/><rect x="532.5" y="259.6" width="1.5" height="405.9"/><rect x="532" y="368" width="1.9" height="297.5"/><rect x="532" y="437" width="3.8" height="228.5"/><rect x="530.3" y="457.3" width="5.9" height="208.2"/><rect x="634.5" y="279.2" width="1.5" height="386.3"/><rect x="633.6" y="401" width="2.3" height="264.5"/><rect x="633.6" y="407.3" width="3.9" height="258.2"/><rect x="632.3" y="464.8" width="6.3" height="200.7"/><rect x="736.8" y="273.7" width="1.5" height="391.8"/><rect x="735.9" y="410.6" width="2.3" height="254.9"/><rect x="735.9" y="421.4" width="3.6" height="244.1"/><rect x="734.3" y="454" width="6.5" height="211.5"/><rect x="838.8" y="292.3" width="1.5" height="373.2"/><rect x="837.6" y="407.3" width="2.6" height="258.2"/><rect x="837.6" y="410.6" width="3.9" height="254.9"/><rect x="836.3" y="458.3" width="6.5" height="207.2"/><rect x="940.8" y="291.3" width="1.5" height="374.2"/><rect x="940.8" y="420.7" width="2.7" height="244.8"/><rect x="939.6" y="424.6" width="3.9" height="240.9"/><rect x="938.3" y="459" width="6.5" height="206.5"/></g>
<g fill="none" stroke="#f4f4f4"><path d="M317.1 231.3 V665.9" stroke-width="1.6"/><path d="M308.3 232 H317.5 M311.2 243.4 H317.5 M308.3 254.8 H317.5 M311.2 266.2 H317.5 M308.3 277.6 H317.5 M311.2 289 H317.5 M308.3 300.4 H317.5 M311.2 311.8 H317.5 M308.3 323.2 H317.5 M311.2 334.6 H317.5 M308.3 346 H317.5 M311.2 357.4 H317.5 M308.3 368.8 H317.5 M311.2 380.2 H317.5 M308.3 391.6 H317.5 M311.2 403 H317.5 M308.3 414.4 H317.5 M311.2 425.8 H317.5 M308.3 437.2 H317.5 M311.2 448.6 H317.5 M308.3 460 H317.5 M311.2 471.4 H317.5 M308.3 482.8 H317.5 M311.2 494.2 H317.5 M308.3 505.6 H317.5 M311.2 517 H317.5 M308.3 528.4 H317.5 M311.2 539.8 H317.5 M308.3 551.2 H317.5 M311.2 562.6 H317.5 M308.3 574 H317.5 M311.2 585.4 H317.5 M308.3 596.8 H317.5 M311.2 608.2 H317.5 M308.3 619.6 H317.5 M311.2 631 H317.5 M308.3 642.4 H317.5 M311.2 653.8 H317.5 M308.3 665.2 H317.5" stroke-width="1.3"/><path d="M328.8 674 H976.76" stroke-width="1.6"/><path d="M329.5 673.5 V689.6 M334.89 673.5 V679.6 M340.28 673.5 V679.6 M345.66 673.5 V679.6 M351.05 673.5 V679.6 M356.44 673.5 V684.5 M361.83 673.5 V679.6 M367.22 673.5 V679.6 M372.6 673.5 V679.6 M377.99 673.5 V679.6 M383.38 673.5 V689.6 M388.77 673.5 V679.6 M394.16 673.5 V679.6 M399.54 673.5 V679.6 M404.93 673.5 V679.6 M410.32 673.5 V684.5 M415.71 673.5 V679.6 M421.1 673.5 V679.6 M426.48 673.5 V679.6 M431.87 673.5 V679.6 M437.26 673.5 V689.6 M442.65 673.5 V679.6 M448.04 673.5 V679.6 M453.42 673.5 V679.6 M458.81 673.5 V679.6 M464.2 673.5 V684.5 M469.59 673.5 V679.6 M474.98 673.5 V679.6 M480.36 673.5 V679.6 M485.75 673.5 V679.6 M491.14 673.5 V689.6 M496.53 673.5 V679.6 M501.92 673.5 V679.6 M507.3 673.5 V679.6 M512.69 673.5 V679.6 M518.08 673.5 V684.5 M523.47 673.5 V679.6 M528.86 673.5 V679.6 M534.24 673.5 V679.6 M539.63 673.5 V679.6 M545.02 673.5 V689.6 M550.41 673.5 V679.6 M555.8 673.5 V679.6 M561.18 673.5 V679.6 M566.57 673.5 V679.6 M571.96 673.5 V684.5 M577.35 673.5 V679.6 M582.74 673.5 V679.6 M588.12 673.5 V679.6 M593.51 673.5 V679.6 M598.9 673.5 V689.6 M604.29 673.5 V679.6 M609.68 673.5 V679.6 M615.06 673.5 V679.6 M620.45 673.5 V679.6 M625.84 673.5 V684.5 M631.23 673.5 V679.6 M636.62 673.5 V679.6 M642 673.5 V679.6 M647.39 673.5 V679.6 M652.78 673.5 V689.6 M658.17 673.5 V679.6 M663.56 673.5 V679.6 M668.94 673.5 V679.6 M674.33 673.5 V679.6 M679.72 673.5 V684.5 M685.11 673.5 V679.6 M690.5 673.5 V679.6 M695.88 673.5 V679.6 M701.27 673.5 V679.6 M706.66 673.5 V689.6 M712.05 673.5 V679.6 M717.44 673.5 V679.6 M722.82 673.5 V679.6 M728.21 673.5 V679.6 M733.6 673.5 V684.5 M738.99 673.5 V679.6 M744.38 673.5 V679.6 M749.76 673.5 V679.6 M755.15 673.5 V679.6 M760.54 673.5 V689.6 M765.93 673.5 V679.6 M771.32 673.5 V679.6 M776.7 673.5 V679.6 M782.09 673.5 V679.6 M787.48 673.5 V684.5 M792.87 673.5 V679.6 M798.26 673.5 V679.6 M803.64 673.5 V679.6 M809.03 673.5 V679.6 M814.42 673.5 V689.6 M819.81 673.5 V679.6 M825.2 673.5 V679.6 M830.58 673.5 V679.6 M835.97 673.5 V679.6 M841.36 673.5 V684.5 M846.75 673.5 V679.6 M852.14 673.5 V679.6 M857.52 673.5 V679.6 M862.91 673.5 V679.6 M868.3 673.5 V689.6 M873.69 673.5 V679.6 M879.08 673.5 V679.6 M884.46 673.5 V679.6 M889.85 673.5 V679.6 M895.24 673.5 V684.5 M900.63 673.5 V679.6 M906.02 673.5 V679.6 M911.4 673.5 V679.6 M916.79 673.5 V679.6 M922.18 673.5 V689.6 M927.57 673.5 V679.6 M932.96 673.5 V679.6 M938.34 673.5 V679.6 M943.73 673.5 V679.6 M949.12 673.5 V684.5 M954.51 673.5 V679.6 M959.9 673.5 V679.6 M965.28 673.5 V679.6 M970.67 673.5 V679.6 M976.06 673.5 V689.6" stroke-width="1.3"/></g>
</svg>
<div class="t" style="left:23.6px;top:166.1px;font-family:'DejaVu Serif','Liberation Serif',serif;font-size:16.1px;letter-spacing:0.7px;color:#f0f0f0">db(rms(vh('hb "/Output")))</div>
<div class="a" style="left:20px;top:190px;width:70px;height:20px;overflow:hidden"><div class="t" style="left:-4.4px;top:4.4px;font-size:12.2px;letter-spacing:0.9px;color:#111;transform-origin:0 0;transform:scaleX(1.22)">Name</div></div>
<div class="t pl" style="left:66px;top:239px;font-size:14px;letter-spacing:0.17px">...utput; hb_mt dB2</div>
<div class="t pl" style="left:988px;top:165.5px;font-size:14.5px">1</div>
<div class="t pl" style="left:242px;top:225.9px;font-size:15.8px;letter-spacing:0.42px">-20.0</div>
<div class="t pl" style="left:242px;top:294.3px;font-size:15.8px;letter-spacing:0.42px">-80.0</div>
<div class="t pl" style="left:242px;top:339.9px;font-size:15.8px;letter-spacing:0.42px">-120.0</div>
<div class="t pl" style="left:242px;top:385.5px;font-size:15.8px;letter-spacing:0.42px">-160.0</div>
<div class="t pl" style="left:242px;top:431.1px;font-size:15.8px;letter-spacing:0.42px">-200.0</div>
<div class="t pl" style="left:242px;top:476.7px;font-size:15.8px;letter-spacing:0.42px">-240.0</div>
<div class="t pl" style="left:242px;top:522.3px;font-size:15.8px;letter-spacing:0.42px">-280.0</div>
<div class="t pl" style="left:242px;top:567.9px;font-size:15.8px;letter-spacing:0.42px">-320.0</div>
<div class="t pl" style="left:242px;top:613.5px;font-size:15.8px;letter-spacing:0.42px">-360.0</div>
<div class="t pl" style="left:242px;top:659.1px;font-size:15.8px;letter-spacing:0.42px">-400.0</div>
<div class="t pl" style="left:289px;width:80px;text-align:center;top:699.5px;font-size:15.8px;letter-spacing:0.1px">0.0</div>
<div class="t pl" style="left:342.88px;width:80px;text-align:center;top:699.5px;font-size:15.8px;letter-spacing:0.1px">1.0</div>
<div class="t pl" style="left:396.76px;width:80px;text-align:center;top:699.5px;font-size:15.8px;letter-spacing:0.1px">2.0</div>
<div class="t pl" style="left:450.64px;width:80px;text-align:center;top:699.5px;font-size:15.8px;letter-spacing:0.1px">3.0</div>
<div class="t pl" style="left:504.52px;width:80px;text-align:center;top:699.5px;font-size:15.8px;letter-spacing:0.1px">4.0</div>
<div class="t pl" style="left:558.4px;width:80px;text-align:center;top:699.5px;font-size:15.8px;letter-spacing:0.1px">5.0</div>
<div class="t pl" style="left:612.28px;width:80px;text-align:center;top:699.5px;font-size:15.8px;letter-spacing:0.1px">6.0</div>
<div class="t pl" style="left:666.16px;width:80px;text-align:center;top:699.5px;font-size:15.8px;letter-spacing:0.1px">7.0</div>
<div class="t pl" style="left:720.04px;width:80px;text-align:center;top:699.5px;font-size:15.8px;letter-spacing:0.1px">8.0</div>
<div class="t pl" style="left:773.92px;width:80px;text-align:center;top:699.5px;font-size:15.8px;letter-spacing:0.1px">9.0</div>
<div class="t pl" style="left:827.8px;width:80px;text-align:center;top:699.5px;font-size:15.8px;letter-spacing:0.1px">10</div>
<div class="t pl" style="left:881.68px;width:80px;text-align:center;top:699.5px;font-size:15.8px;letter-spacing:0.1px">11</div>
<div class="t pl" style="left:935.56px;width:80px;text-align:center;top:699.5px;font-size:15.8px;letter-spacing:0.1px">12</div>
<div class="a" style="left:600px;top:715px;width:110px;height:22.8px;overflow:hidden"><div class="t" style="left:6.8px;top:6.0px;font-family:'DejaVu Serif','Liberation Serif',serif;font-size:16.3px;letter-spacing:0.45px;color:#f0f0f0">freq (GHz)</div></div>
<div class="t" style="left:216.6px;top:483.8px;width:16px;height:0;"><div class="t" style="left:0;top:0;transform-origin:0 0;transform:rotate(-90deg) scaleY(1.25);font-family:'DejaVu Serif','Liberation Serif',serif;font-size:15.1px;letter-spacing:0px;color:#f0f0f0">rms (dB)</div></div>
<div class="tb" style="left:13px;top:746px;width:997px;height:19px;border-radius:0 0 8px 8px;background:linear-gradient(#dedede 0%,#d4d4d4 25%,#cacaca 60%,#bebebe 86%,#ababab 94%,#a6a6a6 100%)"></div>
<div class="a" style="left:18.6px;top:752.6px;width:1px;height:5px;background:#909090;box-shadow:2px 0 0 #909090,4px 0 0 #909090"></div>
<div class="a" style="left:81.4px;top:766.6px;width:1.4px;height:25.6px;background:#3a3a3a"></div>
<div class="t ui" style="left:16.6px;top:773.6px;font-size:13.2px;letter-spacing:0.9px">93(234)</div>
<div class="t ui" style="left:95.2px;top:773.6px;font-size:13.2px;letter-spacing:1.12px">plot new graph subwindow</div>
<div class="a" style="left:994px;top:769px;width:9.6px;height:20px;background:#a2a8ae;border-right:1.2px solid #3a3a3a;border-bottom:1.2px solid #3a3a3a"></div>
</body></html>
